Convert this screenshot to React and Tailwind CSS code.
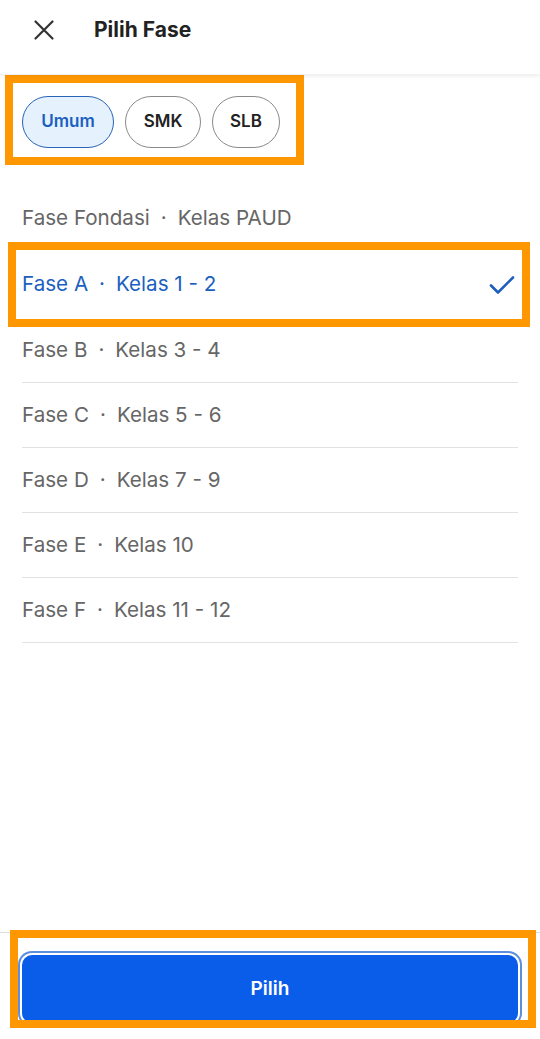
import React from 'react';

const fases = [
  { fase: 'Fase Fondasi', kelas: 'Kelas PAUD' },
  { fase: 'Fase A', kelas: 'Kelas 1 - 2', selected: true },
  { fase: 'Fase B', kelas: 'Kelas 3 - 4' },
  { fase: 'Fase C', kelas: 'Kelas 5 - 6' },
  { fase: 'Fase D', kelas: 'Kelas 7 - 9' },
  { fase: 'Fase E', kelas: 'Kelas 10' },
  { fase: 'Fase F', kelas: 'Kelas 11 - 12' },
];

function FaseRow({ item, divider }) {
  const color = item.selected ? 'text-[#1c5fbf]' : 'text-[#666666]';
  return (
    <div className={`relative flex items-center justify-between ${item.selected ? 'h-[67px]' : 'h-[65px]'} ${divider ? 'border-b border-[#e2e2e2]' : ''}`}>
      <div className={`text-[20.6px] ${color} flex items-center`}>
        <span>{item.fase}</span>
        <span className="mx-[11px]">·</span>
        <span>{item.kelas}</span>
      </div>
      {item.selected && (
        <svg width="26" height="20" viewBox="0 0 26 20" className="mr-[3px]">
          <path d="M2 10.5 L9 17.5 L24 2.5" fill="none" stroke="#1c5fbf" strokeWidth="2.6" strokeLinecap="round" strokeLinejoin="round" />
        </svg>
      )}
      {item.selected && (
        <span className="absolute left-[-14px] right-[-12px] top-[-9px] bottom-[-9px] border-8 border-[#ff9800] pointer-events-none" />
      )}
    </div>
  );
}

export default function App() {
  return (
    <div className="h-[1039px] w-[540px] bg-white flex flex-col font-['Inter','Roboto',sans-serif] overflow-hidden">
      <header className="h-[74px] shrink-0 bg-white shadow-[0_2px_4px_rgba(0,0,0,0.08)] relative z-10">
        <div className="h-[60px] flex items-center">
          <svg width="20" height="20" viewBox="0 0 20 20" className="ml-[34px]">
            <path d="M1.5 1.5 L18.5 18.5 M18.5 1.5 L1.5 18.5" stroke="#333333" strokeWidth="2.2" strokeLinecap="round" />
          </svg>
          <h1 className="ml-[40px] text-[21px] font-bold text-[#222222]">Pilih Fase</h1>
        </div>
      </header>

      <div className="pl-[5px] pt-[1px]">
        <div className="w-[299px] h-[90px] border-8 border-[#ff9800] flex items-center gap-[11px] pl-[9px] pt-[4px]">
          <button className="w-[92px] h-[52px] rounded-full border border-[#2a64b8] bg-[#e5f1fd] text-[17px] font-semibold text-[#1b5fc1]">Umum</button>
          <button className="w-[76px] h-[52px] rounded-full border border-[#8a8a8a] bg-white text-[17px] font-semibold text-[#222222]">SMK</button>
          <button className="w-[68px] h-[52px] rounded-full border border-[#8a8a8a] bg-white text-[17px] font-semibold text-[#222222]">SLB</button>
        </div>
      </div>

      <div className="mt-[21px] px-[22px]">
        {fases.map((item, i) => (
          <FaseRow key={item.fase} item={item} divider={i >= 2} />
        ))}
      </div>

      <div className="flex-1" />

      <footer className="shrink-0 border-t border-[#dddddd] h-[107px] relative">
        <div className="px-[22px] pt-[22px]">
          <button className="w-full h-[68px] rounded-[10px] bg-[#0a5de8] text-white text-[19px] font-semibold ring-2 ring-[#5b8fe0] ring-offset-2">
            Pilih
          </button>
        </div>
        <span className="absolute left-[10px] right-[4px] top-[-3px] bottom-[11px] border-8 border-[#ff9800] pointer-events-none" />
      </footer>
    </div>
  );
}
